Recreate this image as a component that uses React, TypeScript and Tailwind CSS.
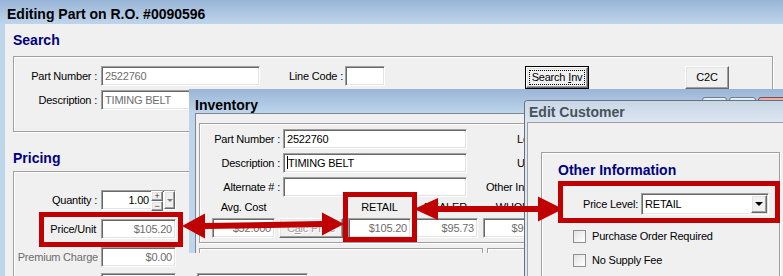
import React from 'react';

const field =
  'border border-t-[#a0a0a0] border-l-[#a0a0a0] border-b-white border-r-white bg-white shadow-[inset_1px_1px_0_#696969,inset_-1px_-1px_0_#e3e3e3]';
const raised =
  'border border-t-white border-l-white border-b-[#696969] border-r-[#696969] bg-[#f0f0f0] shadow-[inset_-1px_-1px_0_#a0a0a0,inset_1px_1px_0_#e3e3e3]';
const group = 'border border-[#a0a0a0] shadow-[inset_1px_1px_0_#fff,1px_1px_0_#fff]';

function Heading({ children, className = '' }: { children: React.ReactNode; className?: string }) {
  return (
    <div className={`text-[14px] font-bold leading-[16px] tracking-normal text-[#000080] ${className}`}>
      {children}
    </div>
  );
}

function Label({ children, w, gray = false }: { children: React.ReactNode; w: string; gray?: boolean }) {
  return (
    <div className={`${w} shrink-0 whitespace-nowrap text-right leading-[20px] ${gray ? 'text-[#6d6d6d]' : ''}`}>
      {children}
    </div>
  );
}

function Field({
  w,
  value = '',
  right = false,
  gray = false,
  caret = false,
  className = '',
}: {
  w: string;
  value?: string;
  right?: boolean;
  gray?: boolean;
  caret?: boolean;
  className?: string;
}) {
  return (
    <div
      className={`${field} ${w} h-[20px] shrink-0 overflow-hidden whitespace-nowrap px-[3px] leading-[18px] ${
        right ? 'text-right' : ''
      } ${gray ? 'text-[#6d6d6d]' : 'text-black'} ${className}`}
    >
      {caret && <span className="inline-block h-[13px] w-px translate-y-[2px] bg-black" />}
      {value}
    </div>
  );
}

function Check({ label }: { label: string }) {
  return (
    <div className="flex h-[13px] items-center">
      <div className="h-[13px] w-[13px] border border-[#8e8f8f] bg-linear-to-br from-[#e4e4e4] to-white" />
      <span className="ml-[6px] leading-[13px]">{label}</span>
    </div>
  );
}

function MainWindow() {
  return (
    <div className="flex h-full flex-col">
      <div className="h-[24px] shrink-0 bg-linear-to-b from-[#99b5d6] to-[#bed5ec] pl-[7px] pt-[6px]">
        <div className="text-[14px] font-bold leading-[16px] tracking-normal">Editing Part on R.O. #0090596</div>
      </div>
      <div className="flex flex-1">
        <div className="w-[5px] bg-[#bed5ec]" />
        <div className="flex-1 bg-[#f0f0f0] pl-[8px] pt-[8px]">
          <Heading>Search</Heading>
          <div className={`${group} mt-[8px] h-[76px] w-[760px] pt-[9px]`}>
            <div className="flex h-[24px] items-start">
              <Label w="w-[83px]">Part Number :</Label>
              <Field w="w-[159px] ml-[4px]" value="2522760" gray />
              <div className="ml-[25px] w-[58px] text-right leading-[20px]">Line Code :</div>
              <Field w="w-[40px] ml-[2px]" />
              <div className="ml-[140px] h-[23px] w-[64px] border border-black">
                <div className={`${raised} flex h-full items-center justify-center p-[2px]`}>
                  <div className="flex h-full w-full items-center justify-center border border-dotted border-black leading-[13px]">
                    Search <span className="ml-[3px] underline">I</span>nv
                  </div>
                </div>
              </div>
              <div className={`${raised} ml-[96px] flex h-[23px] w-[44px] items-center justify-center`}>C2C</div>
            </div>
            <div className="flex h-[24px] items-start">
              <Label w="w-[83px]">Description :</Label>
              <Field w="w-[159px] ml-[4px]" value="TIMING BELT" gray />
            </div>
          </div>

          <Heading className="mt-[18px]">Pricing</Heading>
          <div className={`${group} mt-[5px] h-[200px] w-[760px] pt-[18px]`}>
            <div className="flex h-[29px] items-start">
              <Label w="w-[83px]">Quantity :</Label>
              <div className={`${field} ml-[4px] flex h-[20px] w-[75px] items-stretch`}>
                <div className="flex-1 pr-[2px] text-right leading-[18px]">1.00</div>
                <div className="flex w-[12px] flex-col">
                  <div className={`${raised} flex flex-1 items-center justify-center text-[9px] leading-[8px] text-[#404040]`}>+</div>
                  <div className={`${raised} flex flex-1 items-center justify-center text-[9px] leading-[8px] text-[#404040]`}>−</div>
                </div>
                <div className={`${raised} ml-[1px] flex w-[11px] items-center justify-center`}>
                  <div className="h-0 w-0 border-x-[3px] border-t-[3px] border-x-transparent border-t-[#808080]" />
                </div>
              </div>
            </div>
            <div className="flex h-[28px] items-start">
              <Label w="w-[82px]">Price/Unit</Label>
              <Field w="w-[75px] ml-[5px]" value="$105.20" right gray />
            </div>
            <div className="flex h-[26px] items-start">
              <Label w="w-[84px]" gray>
                Premium Charge
              </Label>
              <Field w="w-[75px] ml-[3px]" value="$0.00" right gray />
            </div>
            <div className="flex items-start">
              <Field w="w-[75px] ml-[87px]" />
              <Field w="w-[111px] ml-[21px]" />
            </div>
          </div>
        </div>
      </div>
    </div>
  );
}

function InventoryWindow() {
  return (
    <div className="absolute left-[189px] top-[89px] h-[164px] w-[610px] overflow-hidden bg-[#bed5ec]">
      <div className="flex h-[24px] bg-linear-to-b from-[#99b5d6] to-[#bed5ec] pl-[6px]">
        <div className="pt-[8px] text-[14px] font-bold leading-[16px] tracking-normal">Inventory</div>
        <div className="ml-auto flex gap-[2px] pr-[1px] pt-[8px]">
          <div className="h-[18px] w-[25px] rounded-[3px] border border-[#6f7e8e] bg-linear-to-b from-[#e8eef5] to-[#c2d3e6]" />
          <div className="h-[18px] w-[27px] rounded-[3px] border border-[#6f7e8e] bg-linear-to-b from-[#e8eef5] to-[#c2d3e6]" />
          <div className="h-[18px] w-[40px] rounded-[3px] border border-[#7a4b48] bg-linear-to-b from-[#f0b4aa] to-[#d2504a]" />
        </div>
      </div>
      <div className="ml-[6px] h-[140px] border-l border-t border-[#7d8794] bg-[#f0f0f0] pl-[3px] pt-[9px]">
        <div className={`${group} h-[120px] w-[600px] pt-[5px]`}>
          <div className="flex h-[24px] items-start">
            <Label w="w-[80px]">Part Number :</Label>
            <Field w="w-[184px] ml-[3px]" value="2522760" />
            <div className="ml-[50px] leading-[20px]">Location :</div>
          </div>
          <div className="flex h-[24px] items-start">
            <Label w="w-[80px]">Description :</Label>
            <Field w="w-[184px] ml-[3px]" value="TIMING BELT" caret />
            <div className="ml-[50px] leading-[20px]">UPC :</div>
          </div>
          <div className="flex h-[20px] items-start">
            <Label w="w-[80px]">Alternate # :</Label>
            <Field w="w-[184px] ml-[3px]" />
            <div className="ml-[19px] leading-[20px]">Other Info :</div>
          </div>
          <div className="flex h-[21px] items-start whitespace-nowrap text-center leading-[21px]">
            <div className="ml-[12px] w-[63px]">Avg. Cost</div>
            <div className="ml-[4px] w-[64px]" />
            <div className="ml-[5px] w-[63px]">RETAIL</div>
            <div className="ml-[2px] w-[65px]">DEALER</div>
            <div className="ml-[5px] w-[65px]">WHOLE</div>
          </div>
          <div className="flex h-[20px] items-start">
            <Field w="w-[63px] ml-[12px]" value="$52.000" right gray />
            <div
              className={`${raised} ml-[4px] flex h-[20px] w-[64px] items-center justify-center text-[#a0a0a0] [text-shadow:1px_1px_0_#fff]`}
            >
              C<span className="underline">a</span>lc Price
            </div>
            <Field w="w-[63px] ml-[5px]" value="$105.20" right gray />
            <Field w="w-[65px] ml-[2px]" value="$95.73" right gray />
            <Field w="w-[65px] ml-[5px]" value="$90.00" right gray />
          </div>
        </div>
        <div className="mt-[5px] flex">
          <div className={`${group} h-[30px] w-[284px]`} />
          <div className={`${group} ml-[4px] h-[30px] w-[200px]`} />
        </div>
      </div>
    </div>
  );
}

function EditCustomerWindow() {
  return (
    <div className="absolute left-[524px] top-[100px] h-[190px] w-[270px] overflow-hidden rounded-tl-[4px] border-l border-t border-[#66727e] bg-[#dfe8f1]">
      <div className="h-[21px] bg-linear-to-b from-[#c8d6e5] to-[#dce6f1] pl-[4px] pt-[3px]">
        <div className="text-[14px] font-bold leading-[16px] tracking-normal text-[#46525c]">Edit Customer</div>
      </div>
      <div className="ml-[2px] h-[170px] border-l border-t border-[#a0a0a0] bg-[#f0f0f0] pt-[29px]">
        <div className={`${group} ml-[13px] h-[200px] w-[239px]`}>
          <Heading className="ml-[16px] mt-[9px]">Other Information</Heading>
          <div className="mt-[15px] flex items-start">
            <div className="ml-[41px] w-[54px] whitespace-nowrap text-right leading-[22px]">Price Level:</div>
            <div className={`${field} ml-[4px] flex h-[22px] w-[128px] items-center pl-[3px]`}>
              <span className="flex-1 leading-[18px]">RETAIL</span>
              <div className={`${raised} mr-[1px] flex h-[18px] w-[16px] items-center justify-center`}>
                <div className="h-0 w-0 border-x-[4px] border-t-[4px] border-x-transparent border-t-black" />
              </div>
            </div>
          </div>
          <div className="ml-[31px] mt-[15px]">
            <Check label="Purchase Order Required" />
          </div>
          <div className="ml-[31px] mt-[11px]">
            <Check label="No Supply Fee" />
          </div>
        </div>
      </div>
    </div>
  );
}

function Annotations() {
  return (
    <>
      <div className="absolute left-[39px] top-[212px] h-[35px] w-[144px] border-[5px] border-[#c00000]" />
      <div className="absolute left-[343px] top-[192px] h-[50px] w-[74px] border-[5px] border-[#c00000]" />
      <div className="absolute left-[558px] top-[181px] h-[42px] w-[222px] border-[5px] border-[#c00000]" />
      <svg className="pointer-events-none absolute inset-0" width="783" height="276" viewBox="0 0 783 276">
        <polygon
          fill="#c00000"
          points="182,226 205,213.5 205,223 322,221 322,212.5 344,224 322,235.5 322,227 205,229 205,238.5"
        />
        <polygon
          fill="#c00000"
          points="414,209 438,198 438,206 538,206 538,196.5 563,209 538,221.5 538,212 438,212 438,220"
        />
      </svg>
    </>
  );
}

export default function App() {
  return (
    <div className="relative h-[276px] w-[783px] overflow-hidden bg-[#f0f0f0] font-['Liberation_Sans',Arial,sans-serif] text-[11px] tracking-[-0.2px] text-black">
      <MainWindow />
      <InventoryWindow />
      <EditCustomerWindow />
      <Annotations />
    </div>
  );
}
